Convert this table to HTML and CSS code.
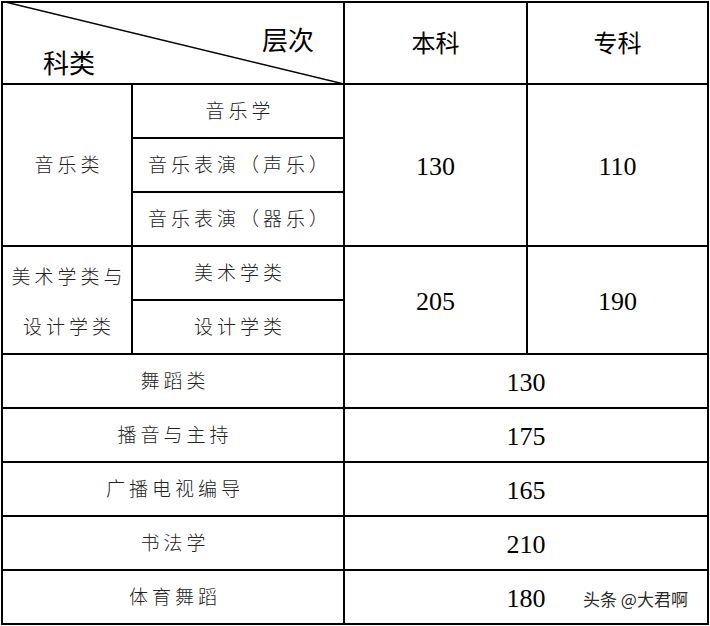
FILE: index.html
```html
<!DOCTYPE html>
<html lang="zh-CN">
<head>
<meta charset="utf-8">
<title>分数线</title>
<link rel="stylesheet" href="styles.css">
</head>
<body>
<div class="wrap">
  <div class="table">
    <div class="cell head-split">
      <svg class="diag" viewBox="0 0 100 100" preserveAspectRatio="none"><line x1="0" y1="0" x2="100" y2="100" stroke="#000" stroke-width="1.5" vector-effect="non-scaling-stroke"/></svg>
      <span class="lbl-top">层次</span>
      <span class="lbl-bottom">科类</span>
    </div>
    <div class="cell head">本科</div>
    <div class="cell head">专科</div>

    <div class="cell txt music-cat">音乐类</div>
    <div class="cell txt">音乐学</div>
    <div class="cell num music-a">130</div>
    <div class="cell num music-b">110</div>
    <div class="cell txt">音乐表演（声乐）</div>
    <div class="cell txt">音乐表演（器乐）</div>

    <div class="cell txt art-cat"><span class="line">美术学类与</span><span class="line">设计学类</span></div>
    <div class="cell txt">美术学类</div>
    <div class="cell num art-a">205</div>
    <div class="cell num art-b">190</div>
    <div class="cell txt">设计学类</div>

    <div class="cell txt wide-name">舞蹈类</div>
    <div class="cell num wide-val">130</div>
    <div class="cell txt wide-name">播音与主持</div>
    <div class="cell num wide-val">175</div>
    <div class="cell txt wide-name">广播电视编导</div>
    <div class="cell num wide-val">165</div>
    <div class="cell txt wide-name">书法学</div>
    <div class="cell num wide-val">210</div>
    <div class="cell txt wide-name">体育舞蹈</div>
    <div class="cell num wide-val">180</div>
  </div>
  <div class="watermark">头条 @大君啊</div>
</div>
</body>
</html>
```

FILE: styles.css
```css
html, body {
  margin: 0;
  padding: 0;
  background: #fff;
}
body {
  width: 710px;
  height: 626px;
  overflow: hidden;
}
.wrap {
  position: relative;
  margin: 1px 0 0 1px;
  width: fit-content;
}
.table {
  display: grid;
  grid-template-columns: 128px 210px 181px 179px;
  grid-template-rows: 80px repeat(10, 52px);
  gap: 2px;
  padding: 2px;
  background: #000;
}
.cell {
  background: #fff;
  display: flex;
  align-items: center;
  justify-content: center;
}
.head-split {
  grid-column: 1 / 3;
  position: relative;
  display: grid;
  grid-template-columns: 1fr;
  grid-template-rows: 1fr;
  justify-content: stretch;
  align-items: stretch;
}
.diag {
  position: absolute;
  left: -2px;
  top: -2px;
  width: calc(100% + 3px);
  height: calc(100% + 3px);
}
.lbl-top, .lbl-bottom {
  grid-area: 1 / 1;
  font-family: "Noto Sans CJK SC", sans-serif;
  font-size: 26px;
  line-height: 31px;
  color: #000;
}
.lbl-top {
  justify-self: end;
  align-self: start;
  margin: 20px 29px 0 0;
}
.lbl-bottom {
  justify-self: start;
  align-self: end;
  margin: 0 0 6px 40px;
}
.head {
  font-family: "Noto Sans CJK SC", sans-serif;
  font-size: 24px;
  color: #000;
  padding-bottom: 4px;
}
.txt {
  font-family: "Noto Sans CJK SC", sans-serif;
  font-weight: 300;
  font-size: 19px;
  letter-spacing: 4px;
  padding-left: 4px;
  padding-bottom: 3px;
  color: #222;
}
.num {
  font-family: "Liberation Serif", "Times New Roman", serif;
  font-size: 26px;
  color: #000;
  padding-top: 3px;
}
.music-cat { grid-row: 2 / 5; grid-column: 1; }
.music-a { grid-row: 2 / 5; grid-column: 3; }
.music-b { grid-row: 2 / 5; grid-column: 4; }
.art-cat {
  grid-row: 5 / 7;
  grid-column: 1;
  flex-direction: column;
  padding-left: 0;
  padding-bottom: 0;
  padding-top: 1px;
}
.art-cat .line {
  display: block;
  height: 50px;
  line-height: 50px;
  padding-left: 4px;
}
.art-a { grid-row: 5 / 7; grid-column: 3; }
.art-b { grid-row: 5 / 7; grid-column: 4; }
.wide-name { grid-column: 1 / 3; }
.wide-val { grid-column: 3 / 5; }
.watermark {
  position: absolute;
  left: 582px;
  top: 587px;
  font-family: "Noto Sans CJK SC", sans-serif;
  font-size: 17px;
  line-height: 22px;
  color: #2a2a2a;
  text-shadow: 0 0 2px #fff;
}
```
